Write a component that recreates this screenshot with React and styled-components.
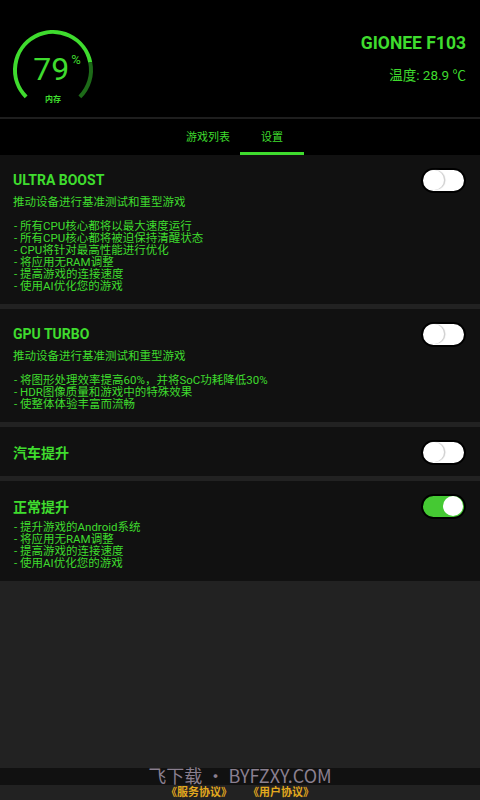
import React, { useState } from "react";
import styled, { createGlobalStyle } from "styled-components";

const GREEN = "#3fdc2e";

const GlobalStyle = createGlobalStyle`
  html, body {
    margin: 0;
    padding: 0;
    background: #222222;
  }
  * {
    box-sizing: border-box;
  }
`;

const cards = [
  {
    title: "ULTRA BOOST",
    subtitle: "推动设备进行基准测试和重型游戏",
    lines: [
      "- 所有CPU核心都将以最大速度运行",
      "- 所有CPU核心都将被迫保持清醒状态",
      "-  CPU将针对最高性能进行优化",
      "- 将应用无RAM调整",
      "- 提高游戏的连接速度",
      "- 使用AI优化您的游戏",
    ],
    on: false,
  },
  {
    title: "GPU TURBO",
    subtitle: "推动设备进行基准测试和重型游戏",
    lines: [
      "- 将图形处理效率提高60%，并将SoC功耗降低30%",
      "-  HDR图像质量和游戏中的特殊效果",
      "- 使整体体验丰富而流畅",
    ],
    on: false,
  },
  { title: "汽车提升", lines: [], on: false },
  {
    title: "正常提升",
    lines: [
      "- 提升游戏的Android系统",
      "- 将应用无RAM调整",
      "- 提高游戏的连接速度",
      "- 使用AI优化您的游戏",
    ],
    on: true,
  },
];

const point = (deg, r, c) => {
  const a = (deg * Math.PI) / 180;
  return [c + r * Math.sin(a), c - r * Math.cos(a)];
};

const arc = (from, to, r, c) => {
  const [x1, y1] = point(from, r, c);
  const [x2, y2] = point(to, r, c);
  const large = to - from > 180 ? 1 : 0;
  return `M ${x1} ${y1} A ${r} ${r} 0 ${large} 1 ${x2} ${y2}`;
};

const Gauge = ({ value }) => {
  const end = -135 + (270 * value) / 100;
  return (
    <GaugeBox>
      <svg width="88" height="88" viewBox="0 0 88 88">
        <path d={arc(-135, end, 38, 44)} fill="none" stroke={GREEN} strokeWidth="4" />
        <path d={arc(end, 135, 38, 44)} fill="none" stroke="#1d6a18" strokeWidth="4" />
      </svg>
      <GaugeValue>
        {value}
        <Percent>%</Percent>
      </GaugeValue>
      <GaugeLabel>内存</GaugeLabel>
    </GaugeBox>
  );
};

const App = () => {
  const [tab, setTab] = useState(1);
  const [states, setStates] = useState(cards.map((c) => c.on));
  return (
    <Page>
      <GlobalStyle />
      <Header>
        <Gauge value={79} />
        <DeviceInfo>
          <DeviceName>GIONEE F103</DeviceName>
          <Temp>温度: 28.9 ℃</Temp>
        </DeviceInfo>
      </Header>
      <Tabs>
        {["游戏列表", "设置"].map((t, i) => (
          <Tab key={t} active={tab === i} onClick={() => setTab(i)}>
            {t}
          </Tab>
        ))}
      </Tabs>
      <Content>
        {cards.map((card, i) => (
          <Card key={card.title}>
            <CardHead>
              <CardTitle>{card.title}</CardTitle>
              <Toggle
                on={states[i]}
                onClick={() =>
                  setStates(states.map((s, j) => (j === i ? !s : s)))
                }
              >
                <Knob on={states[i]} />
              </Toggle>
            </CardHead>
            {card.subtitle && <Subtitle>{card.subtitle}</Subtitle>}
            {card.lines.length > 0 && (
              <List spaced={!!card.subtitle}>
                {card.lines.map((l) => (
                  <li key={l}>{l}</li>
                ))}
              </List>
            )}
          </Card>
        ))}
      </Content>
      <Watermark>飞下载 • BYFZXY.COM</Watermark>
      <Footer>
        <FooterLink>《服务协议》</FooterLink>
        <FooterLink>《用户协议》</FooterLink>
      </Footer>
    </Page>
  );
};

const Page = styled.div`
  width: 480px;
  height: 800px;
  display: flex;
  flex-direction: column;
  background: #222222;
  font-family: Roboto, "Noto Sans CJK SC", sans-serif;
  color: ${GREEN};
  overflow: hidden;
`;

const Header = styled.header`
  height: 119px;
  flex-shrink: 0;
  display: flex;
  justify-content: space-between;
  align-items: flex-start;
  padding: 26px 14px 0 9px;
  background: #000;
  border-bottom: 2px solid #1e1e1e;
`;

const GaugeBox = styled.div`
  width: 88px;
  height: 88px;
  display: grid;
  & > * {
    grid-area: 1 / 1;
  }
`;

const GaugeValue = styled.div`
  align-self: center;
  justify-self: center;
  margin: 0 0 2px 8px;
  font-size: 32px;
  font-weight: 400;
  line-height: 1;
  display: flex;
  align-items: flex-start;
`;

const Percent = styled.span`
  font-size: 13px;
  margin: 0 0 0 2px;
`;

const GaugeLabel = styled.div`
  align-self: end;
  justify-self: center;
  font-size: 8px;
  line-height: 1;
  margin-bottom: 10px;
  font-weight: 700;
`;

const DeviceInfo = styled.div`
  text-align: right;
  padding-top: 7px;
`;

const DeviceName = styled.div`
  font-size: 17.5px;
  font-weight: 700;
  line-height: 20px;
`;

const Temp = styled.div`
  margin-top: 14px;
  font-size: 13.5px;
  line-height: 16px;
`;

const Tabs = styled.nav`
  height: 36px;
  flex-shrink: 0;
  display: flex;
  justify-content: center;
  background: #000;
`;

const Tab = styled.div`
  width: 64px;
  display: flex;
  align-items: center;
  justify-content: center;
  font-size: 11px;
  cursor: pointer;
  border-bottom: 3px solid ${(p) => (p.active ? GREEN : "transparent")};
  padding-top: 1px;
`;

const Content = styled.main`
  flex: 1;
  display: flex;
  flex-direction: column;
  gap: 5px;
`;

const Card = styled.section`
  background: #111111;
  padding: 13px 14px 12px 13px;
`;

const CardHead = styled.div`
  display: flex;
  align-items: center;
  justify-content: space-between;
  height: 24px;
`;

const CardTitle = styled.h2`
  margin: 0;
  font-size: 14px;
  font-weight: 700;
`;

const Toggle = styled.div`
  width: 45px;
  height: 25px;
  border-radius: 13px;
  border: 2px solid #000;
  background: ${(p) => (p.on ? "#45c933" : "#fff")};
  display: flex;
  align-items: center;
  justify-content: ${(p) => (p.on ? "flex-end" : "flex-start")};
  padding: 0 1px;
  cursor: pointer;
`;

const Knob = styled.div`
  width: 20px;
  height: 20px;
  border-radius: 50%;
  background: #fff;
  box-shadow: ${(p) => (p.on ? "none" : "1.5px 0 1px #cfcfcf")};
`;

const Subtitle = styled.p`
  margin: 3px 0 0;
  font-size: 11.5px;
  line-height: 14px;
`;

const List = styled.ul`
  list-style: none;
  margin: ${(p) => (p.spaced ? "11px" : "3px")} 0 0;
  padding: 0 0 0 1px;
  font-size: 11.5px;
  line-height: 12px;
`;

const Watermark = styled.div`
  height: 17px;
  flex-shrink: 0;
  background: #111111;
  color: #8a7f8f;
  font-family: "Noto Sans CJK SC", sans-serif;
  font-size: 18px;
  line-height: 15px;
  text-align: center;
  white-space: nowrap;
`;

const Footer = styled.footer`
  height: 15px;
  flex-shrink: 0;
  display: flex;
  justify-content: center;
  align-items: flex-end;
  gap: 16px;
  background: #222222;
`;

const FooterLink = styled.span`
  color: #e3a91e;
  font-size: 11px;
  font-weight: 700;
  line-height: 14px;
`;

export default App;
